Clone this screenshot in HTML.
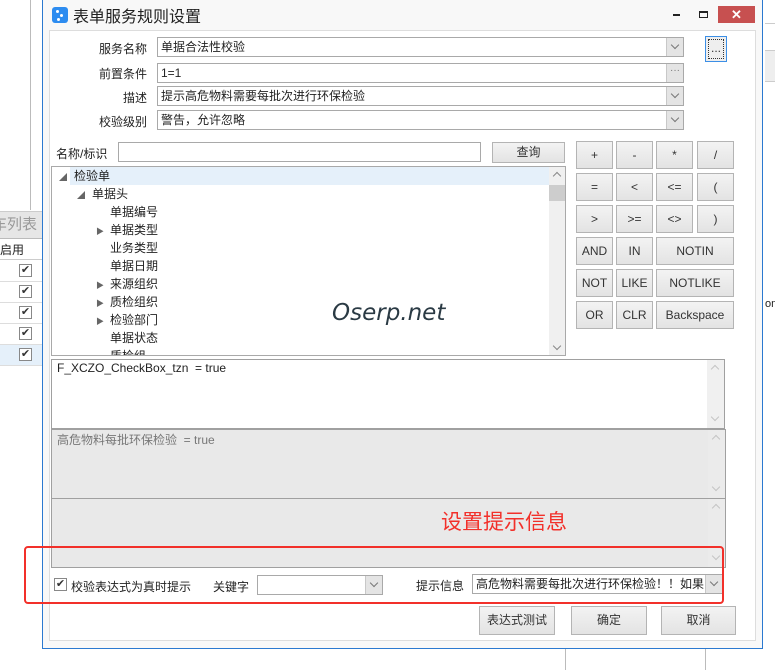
<!DOCTYPE html>
<html><head><meta charset="utf-8"><style>
*{box-sizing:border-box;margin:0;padding:0}
body{width:775px;height:670px;position:relative;overflow:hidden;background:#fff;font-family:"Liberation Sans","Noto Sans CJK SC",sans-serif;font-size:12px;color:#222}
.a{position:absolute}
.lbl{position:absolute;text-align:right;width:90px;font-size:12px}
.inp{position:absolute;border:1px solid #a9a9a9;background:#fff;height:20px;padding-left:3px;line-height:18px;font-size:12px}
.dd{position:absolute;right:0;top:0;width:17px;height:18px;background:#e4e4e4;border-left:1px solid #c8c8c8;color:#777;font-size:10px;text-align:center;line-height:18px}
.dd.v::after{content:"";position:absolute;left:5px;top:4px;width:5px;height:5px;border-right:1.5px solid #777;border-bottom:1.5px solid #777;transform:rotate(45deg)}
.btn{position:absolute;border:1px solid #b4b4b4;background:linear-gradient(#f3f3f3,#e3e3e3);text-align:center;font-size:12px;color:#333}
.cb{position:absolute;width:13px;height:13px;border:1px solid #888;background:#fff;font-size:11px;line-height:11px;text-align:center;color:#333}
.tr{position:absolute;font-size:12px;height:18px;line-height:18px}
.arr{position:absolute;font-size:8px;color:#666}
.up,.dn{position:absolute;left:5px;width:6px;height:6px;border-left:1.5px solid #c4c4c4;border-top:1.5px solid #c4c4c4}
.up{top:6px;transform:rotate(45deg)}
.dn{bottom:8px;transform:rotate(225deg)}
</style></head><body>
<div class="a" style="left:30px;top:0;width:1px;height:210px;background:#bbb"></div>
<div class="a" style="left:0;top:211px;width:42px;height:28px;background:#e6e6e6;border-top:1px solid #ccc;border-bottom:1px solid #bbb;color:#999;font-size:15px;line-height:26px;text-indent:-8px;overflow:hidden">车列表</div>
<div class="a" style="left:0;top:240px;width:42px;height:20px;border-bottom:1px solid #ccc;font-size:12px;line-height:20px">启用</div>
<div class="a" style="left:0;top:281px;width:42px;height:1px;background:#ddd"></div>
<div class="a" style="left:0;top:302px;width:42px;height:1px;background:#ddd"></div>
<div class="a" style="left:0;top:323px;width:42px;height:1px;background:#ddd"></div>
<div class="a" style="left:0;top:344px;width:42px;height:22px;background:#e5f0fa;border-top:1px solid #ddd;border-bottom:1px solid #ddd"></div>
<div class="cb" style="left:19px;top:264px">✔</div>
<div class="cb" style="left:19px;top:285px">✔</div>
<div class="cb" style="left:19px;top:306px">✔</div>
<div class="cb" style="left:19px;top:327px">✔</div>
<div class="cb" style="left:19px;top:348px">✔</div>
<div class="a" style="left:763px;top:0;width:12px;height:670px;background:#fff"></div>
<div class="a" style="left:765px;top:23px;width:10px;height:1px;background:#ccc"></div>
<div class="a" style="left:765px;top:50px;width:10px;height:32px;background:#eee;border-top:1px solid #ccc;border-bottom:1px solid #ccc"></div>
<div class="a" style="left:765px;top:298px;font-size:11px">om</div>
<div class="a" style="left:565px;top:648px;width:1px;height:22px;background:#bbb"></div>
<div class="a" style="left:705px;top:648px;width:1px;height:22px;background:#bbb"></div>
<div class="a" style="left:42px;top:0;width:721px;height:649px;background:#f8f8f8;border-left:1px solid #2b79d0;border-right:1px solid #2b79d0;border-bottom:1px solid #2b79d0"></div>
<div class="a" style="left:52px;top:7px;width:16px;height:16px;background:#2d8cf0;border-radius:3px"></div>
<div class="a" style="left:56px;top:10px;width:3px;height:3px;background:#fff;border-radius:2px"></div>
<div class="a" style="left:60px;top:14px;width:3px;height:3px;background:#fff;border-radius:2px"></div>
<div class="a" style="left:57px;top:18px;width:3px;height:3px;background:#fff;border-radius:2px"></div>
<div class="a" style="left:73px;top:3px;font-size:16px;color:#222">表单服务规则设置</div>
<div class="a" style="left:673px;top:14px;width:7px;height:2px;background:#222"></div>
<div class="a" style="left:699px;top:11px;width:9px;height:7px;border:1px solid #222;border-top-width:2px"></div>
<div class="a" style="left:718px;top:6px;width:37px;height:17px;background:#c75050;color:#fff;text-align:center;font-size:13px;line-height:17px;font-weight:bold">✕</div>
<div class="a" style="left:49px;top:30px;width:707px;height:611px;background:#fff;border:1px solid #ddd"></div>

<div class="lbl" style="left:57px;top:40px">服务名称</div>
<div class="inp" style="left:157px;top:37px;width:527px">单据合法性校验<div class="dd v"></div></div>
<div class="btn" style="left:705px;top:36px;width:22px;height:26px;border:1px solid #3c8fe6;line-height:24px;background:#eee"><span style="display:block;margin:2px;border:1px dotted #333;height:20px;line-height:16px">...</span></div>
<div class="lbl" style="left:57px;top:65px">前置条件</div>
<div class="inp" style="left:157px;top:63px;width:527px">1=1<div class="dd" style="line-height:14px">···</div></div>
<div class="lbl" style="left:57px;top:89px">描述</div>
<div class="inp" style="left:157px;top:86px;width:527px">提示高危物料需要每批次进行环保检验<div class="dd v"></div></div>
<div class="lbl" style="left:57px;top:113px">校验级别</div>
<div class="inp" style="left:157px;top:110px;width:527px">警告，允许忽略<div class="dd v"></div></div>

<div class="a" style="left:56px;top:145px;font-size:12px">名称/标识</div>
<div class="inp" style="left:118px;top:142px;width:363px"></div>
<div class="btn" style="left:492px;top:142px;width:73px;height:21px;line-height:19px">查询</div>

<div class="a" style="left:51px;top:166px;width:515px;height:190px;border:1px solid #a9a9a9;background:#fff;overflow:hidden">
<div class="a" style="left:18px;top:0;width:479px;height:18px;background:#e5f0fa"></div>
<div class="a" style="left:497px;top:0;width:17px;height:190px;background:#f0f0f0"><div class="up" style="border-color:#888"></div><div class="dn" style="border-color:#888"></div></div>
<div class="a" style="left:497px;top:18px;width:17px;height:16px;background:#cdcdcd"></div>
<div class="arr" style="left:7px;top:5px">◢</div><div class="tr" style="left:22px;top:0">检验单</div>
<div class="arr" style="left:25px;top:23px">◢</div><div class="tr" style="left:40px;top:18px">单据头</div>
<div class="tr" style="left:58px;top:36px">单据编号</div>
<div class="arr" style="left:44px;top:59px">▶</div><div class="tr" style="left:58px;top:54px">单据类型</div>
<div class="tr" style="left:58px;top:72px">业务类型</div>
<div class="tr" style="left:58px;top:90px">单据日期</div>
<div class="arr" style="left:44px;top:113px">▶</div><div class="tr" style="left:58px;top:108px">来源组织</div>
<div class="arr" style="left:44px;top:131px">▶</div><div class="tr" style="left:58px;top:126px">质检组织</div>
<div class="arr" style="left:44px;top:149px">▶</div><div class="tr" style="left:58px;top:144px">检验部门</div>
<div class="tr" style="left:58px;top:162px">单据状态</div>
<div class="tr" style="left:58px;top:180px">质检组</div>
</div>
<div class="a" style="left:332px;top:300px;font-size:23px;font-style:italic;color:#2a3a44;font-family:'DejaVu Sans',sans-serif">Oserp.net</div>

<div class="btn" style="left:576px;top:141px;width:37px;height:28px;line-height:26px">+</div>
<div class="btn" style="left:616px;top:141px;width:37px;height:28px;line-height:26px">-</div>
<div class="btn" style="left:656px;top:141px;width:37px;height:28px;line-height:26px">*</div>
<div class="btn" style="left:697px;top:141px;width:37px;height:28px;line-height:26px">/</div>
<div class="btn" style="left:576px;top:173px;width:37px;height:28px;line-height:26px">=</div>
<div class="btn" style="left:616px;top:173px;width:37px;height:28px;line-height:26px">&lt;</div>
<div class="btn" style="left:656px;top:173px;width:37px;height:28px;line-height:26px">&lt;=</div>
<div class="btn" style="left:697px;top:173px;width:37px;height:28px;line-height:26px">(</div>
<div class="btn" style="left:576px;top:205px;width:37px;height:28px;line-height:26px">&gt;</div>
<div class="btn" style="left:616px;top:205px;width:37px;height:28px;line-height:26px">&gt;=</div>
<div class="btn" style="left:656px;top:205px;width:37px;height:28px;line-height:26px">&lt;&gt;</div>
<div class="btn" style="left:697px;top:205px;width:37px;height:28px;line-height:26px">)</div>
<div class="btn" style="left:576px;top:237px;width:37px;height:28px;line-height:26px">AND</div>
<div class="btn" style="left:616px;top:237px;width:37px;height:28px;line-height:26px">IN</div>
<div class="btn" style="left:656px;top:237px;width:78px;height:28px;line-height:26px">NOTIN</div>
<div class="btn" style="left:576px;top:269px;width:37px;height:28px;line-height:26px">NOT</div>
<div class="btn" style="left:616px;top:269px;width:37px;height:28px;line-height:26px">LIKE</div>
<div class="btn" style="left:656px;top:269px;width:78px;height:28px;line-height:26px">NOTLIKE</div>
<div class="btn" style="left:576px;top:301px;width:37px;height:28px;line-height:26px">OR</div>
<div class="btn" style="left:616px;top:301px;width:37px;height:28px;line-height:26px">CLR</div>
<div class="btn" style="left:656px;top:301px;width:78px;height:28px;line-height:26px">Backspace</div>

<div class="a" style="left:51px;top:359px;width:674px;height:70px;border:1px solid #a0a0a0;background:#fff;padding:1px 5px;font-size:12px">F_XCZO_CheckBox_tzn&nbsp; = true
<div class="a" style="right:0;top:0;width:17px;height:68px;background:#f0f0f0"><div class="up"></div><div class="dn"></div></div></div>
<div class="a" style="left:51px;top:429px;width:675px;height:70px;border:1px solid #a0a0a0;background:#e9e9e9;padding:1px 5px;font-size:12px;color:#777">高危物料每批环保检验&nbsp; = true
<div class="a" style="right:0;top:0;width:17px;height:68px;background:#ebebeb"><div class="up"></div><div class="dn"></div></div></div>
<div class="a" style="left:51px;top:498px;width:675px;height:70px;border:1px solid #a0a0a0;background:#e9e9e9">
<div class="a" style="right:0;top:0;width:17px;height:68px;background:#ebebeb"><div class="up"></div><div class="dn"></div></div></div>
<div class="a" style="left:441px;top:506px;font-size:21px;color:#f2302a">设置提示信息</div>

<div class="cb" style="left:54px;top:578px">✔</div>
<div class="a" style="left:71px;top:578px;font-size:12px">校验表达式为真时提示</div>
<div class="a" style="left:213px;top:578px;font-size:12px">关键字</div>
<div class="inp" style="left:257px;top:575px;width:126px">&nbsp;<div class="dd v"></div></div>
<div class="a" style="left:416px;top:577px;font-size:12px">提示信息</div>
<div class="inp" style="left:472px;top:574px;width:251px;overflow:hidden;white-space:nowrap;padding-right:18px">高危物料需要每批次进行环保检验！！如果<div class="dd v"></div></div>
<div class="a" style="left:24px;top:546px;width:700px;height:58px;border:2px solid #f2302a;border-radius:4px"></div>

<div class="btn" style="left:479px;top:606px;width:76px;height:29px;line-height:27px">表达式测试</div>
<div class="btn" style="left:571px;top:606px;width:76px;height:29px;line-height:27px">确定</div>
<div class="btn" style="left:661px;top:606px;width:75px;height:29px;line-height:27px">取消</div>
</body></html>
